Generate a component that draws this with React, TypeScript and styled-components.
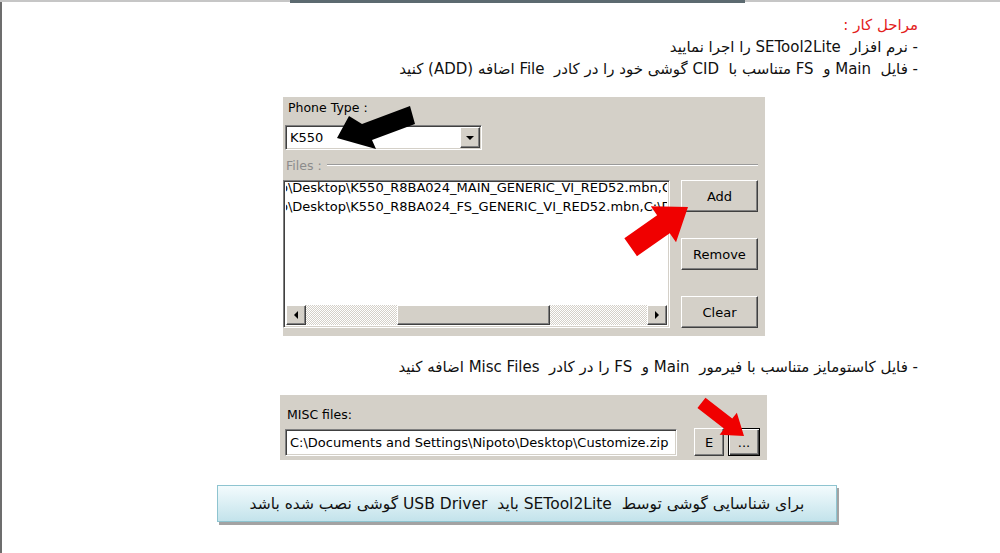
import React from 'react'
import styled, { createGlobalStyle, css } from 'styled-components'

const GlobalStyle = createGlobalStyle`
  html,
  body {
    margin: 0;
    padding: 0;
    background: #fff;
  }
  body {
    font-family: 'DejaVu Sans', sans-serif;
  }
`

// classic win9x bevels
const sunken = css`
  box-sizing: border-box;
  background: #fff;
  border: 1px solid;
  border-color: #808080 #fff #fff #808080;
  box-shadow: inset 1px 1px 0 #404040, inset -1px -1px 0 #d4d0c8;
`

const raised = css`
  box-sizing: border-box;
  background: #d4d0c8;
  border: 1px solid;
  border-color: #fff #404040 #404040 #fff;
  box-shadow: inset -1px -1px 0 #808080;
`

const Page = styled.div`
  position: relative;
  width: 1000px;
  height: 553px;
  overflow: hidden;
  background: #fff;
  box-shadow: inset 2px 0 0 #6d6d6d;
`

const TopRule = styled.div`
  display: flex;
  align-items: flex-start;
  height: 3px;
`

const RuleSegment = styled.div<{ $dark?: boolean; $width?: number }>`
  height: ${({ $dark }) => ($dark ? 3 : 2)}px;
  background: ${({ $dark }) => ($dark ? '#5c6a70' : '#c6c6c6')};
  ${({ $width }) => ($width ? `width: ${$width}px;` : 'flex: 1;')}
`

const Steps = styled.div<{ $top: number }>`
  margin-top: ${({ $top }) => $top}px;
  padding-right: 82px;
  direction: rtl;
  text-align: right;
  font-family: 'DejaVu Sans', sans-serif;
  font-size: 15px;
  line-height: 22px;
  color: #111;
  white-space: pre;
`

const Heading = styled.div`
  color: #e3211c;
`

const Panel = styled.div<{ $top: number; $left: number; $width: number; $height: number }>`
  box-sizing: border-box;
  margin-top: ${({ $top }) => $top}px;
  margin-left: ${({ $left }) => $left}px;
  width: ${({ $width }) => $width}px;
  height: ${({ $height }) => $height}px;
  display: flex;
  flex-direction: column;
  background: #d4d0c8;
  font-family: 'DejaVu Sans', sans-serif;
  font-size: 13px;
  color: #000;
`

const FieldLabel = styled.div<{ $indent: number; $top: number }>`
  margin-top: ${({ $top }) => $top}px;
  margin-left: ${({ $indent }) => $indent}px;
  font-size: 12.5px;
  line-height: 14px;
`

const Combo = styled.div`
  ${sunken}
  display: flex;
  align-items: center;
  margin: 10px 0 0 2px;
  width: 197px;
  height: 25px;
  padding: 1px;
`

const ComboValue = styled.span`
  flex: 1;
  padding-left: 3px;
  font-size: 13px;
`

const DropButton = styled.div`
  ${raised}
  display: flex;
  align-items: center;
  justify-content: center;
  width: 20px;
  height: 21px;
`

const Caret = styled.span<{ $dir: 'down' | 'left' | 'right' }>`
  width: 0;
  height: 0;
  ${({ $dir }) =>
    $dir === 'down'
      ? 'border-left: 4px solid transparent; border-right: 4px solid transparent; border-top: 4px solid #000;'
      : $dir === 'left'
      ? 'border-top: 4px solid transparent; border-bottom: 4px solid transparent; border-right: 4px solid #000;'
      : 'border-top: 4px solid transparent; border-bottom: 4px solid transparent; border-left: 4px solid #000;'}
`

const GroupHeader = styled.div`
  display: flex;
  align-items: center;
  gap: 5px;
  height: 14px;
  margin: 8px 7px 0 3px;
`

const GroupTitle = styled.span`
  color: #8c8c8c;
  font-size: 12.5px;
`

const Etch = styled.div`
  flex: 1;
  height: 1px;
  background: #9a9a9a;
  border-bottom: 1px solid #fff;
`

const FilesRow = styled.div`
  display: flex;
  align-items: flex-start;
  gap: 11px;
  margin-top: 8px;
`

const ListBox = styled.div`
  ${sunken}
  display: flex;
  flex-direction: column;
  width: 387px;
  height: 148px;
  padding: 2px;
  overflow: hidden;
`

const ListItems = styled.div`
  flex: 1;
  margin-top: -4px;
  overflow: hidden;
  white-space: nowrap;
  font-size: 13px;
  line-height: 18.5px;
`

const ListLine = styled.div`
  margin-left: -6px;
`

const HScroll = styled.div`
  display: flex;
  height: 20px;
`

const ScrollArrow = styled.div`
  ${raised}
  display: flex;
  align-items: center;
  justify-content: center;
  width: 20px;
  height: 20px;
`

const Track = styled.div`
  flex: 1;
  display: flex;
  background: repeating-conic-gradient(#fff 0 25%, #d4d0c8 0 50%) 0 0 / 2px 2px;
`

const Thumb = styled.div<{ $offset: number; $size: number }>`
  ${raised}
  margin-left: ${({ $offset }) => $offset}px;
  width: ${({ $size }) => $size}px;
`

const ButtonColumn = styled.div`
  display: flex;
  flex-direction: column;
  gap: 26px;
  width: 77px;
`

const WinButton = styled.div<{ $width?: number; $height?: number; $default?: boolean }>`
  ${raised}
  display: flex;
  align-items: center;
  justify-content: center;
  width: ${({ $width }) => ($width ? `${$width}px` : '100%')};
  height: ${({ $height }) => $height ?? 32}px;
  font-size: 13px;
  ${({ $default }) =>
    $default &&
    css`
      border: 1px solid #000;
      box-shadow: inset 1px 1px 0 #fff, inset -1px -1px 0 #404040, inset -2px -2px 0 #808080;
    `}
`

const MiscRow = styled.div`
  display: flex;
  align-items: center;
  margin: 6px 0 0 5px;
`

const PathField = styled.div`
  ${sunken}
  display: flex;
  align-items: center;
  width: 392px;
  height: 27px;
  padding-left: 4px;
  font-size: 13px;
  white-space: nowrap;
`

const Spacer = styled.div<{ $w: number }>`
  width: ${({ $w }) => $w}px;
`

const InfoBox = styled.div`
  box-sizing: border-box;
  display: flex;
  align-items: center;
  justify-content: center;
  margin: 25px 0 0 217px;
  width: 620px;
  height: 37px;
  border: 1px solid #8ec4d0;
  background: linear-gradient(#f3fbfd, #c3e3eb);
  box-shadow: 2px 3px 0 #a3a3a3;
  direction: rtl;
  font-size: 15.5px;
  color: #111;
  white-space: pre;
`

const ArrowLayer = styled.svg`
  position: absolute;
  left: 0;
  top: 0;
  width: 1000px;
  height: 553px;
  pointer-events: none;
`

type ArrowProps = {
  x: number
  y: number
  angle: number
  length: number
  shaft: number
  head: number
  headLength: number
  color: string
}

function Arrow({ x, y, angle, length, shaft, head, headLength, color }: ArrowProps) {
  const w = shaft / 2
  const h = head / 2
  const points = [
    [0, 0],
    [-headLength, -h],
    [-headLength, -w],
    [-length, -w],
    [-length, w],
    [-headLength, w],
    [-headLength, h]
  ]
    .map(p => p.join(','))
    .join(' ')
  return <polygon points={points} fill={color} transform={`translate(${x} ${y}) rotate(${angle})`} />
}

export default function App() {
  return (
    <Page>
      <GlobalStyle />
      <TopRule>
        <RuleSegment $width={290} />
        <RuleSegment $dark $width={455} />
        <RuleSegment />
      </TopRule>

      <Steps $top={11}>
        <Heading>مراحل کار :</Heading>
        <div>- نرم افزار  SETool2Lite را اجرا نمایید</div>
        <div>- فایل  Main و  FS متناسب با  CID گوشی خود را در کادر  File اضافه (ADD) کنید</div>
      </Steps>

      <Panel $top={17} $left={283} $width={482} $height={239}>
        <FieldLabel $top={4} $indent={5}>
          Phone Type :
        </FieldLabel>
        <Combo>
          <ComboValue>K550</ComboValue>
          <DropButton>
            <Caret $dir="down" />
          </DropButton>
        </Combo>
        <GroupHeader>
          <GroupTitle>Files :</GroupTitle>
          <Etch />
        </GroupHeader>
        <FilesRow>
          <ListBox>
            <ListItems>
              <ListLine>o\Desktop\K550_R8BA024_MAIN_GENERIC_VI_RED52.mbn,C:\Documents</ListLine>
              <ListLine>o\Desktop\K550_R8BA024_FS_GENERIC_VI_RED52.mbn,C:\Documents</ListLine>
            </ListItems>
            <HScroll>
              <ScrollArrow>
                <Caret $dir="left" />
              </ScrollArrow>
              <Track>
                <Thumb $offset={91} $size={153} />
              </Track>
              <ScrollArrow>
                <Caret $dir="right" />
              </ScrollArrow>
            </HScroll>
          </ListBox>
          <ButtonColumn>
            <WinButton>Add</WinButton>
            <WinButton>Remove</WinButton>
            <WinButton>Clear</WinButton>
          </ButtonColumn>
        </FilesRow>
      </Panel>

      <Steps $top={20}>
        <div>- فایل کاستومایز متناسب با فیرمور  Main و  FS را در کادر  Misc Files اضافه کنید</div>
      </Steps>

      <Panel $top={17} $left={280} $width={487} $height={65}>
        <FieldLabel $top={13} $indent={7}>
          MISC files:
        </FieldLabel>
        <MiscRow>
          <PathField>C:\Documents and Settings\Nipoto\Desktop\Customize.zip</PathField>
          <Spacer $w={17} />
          <WinButton $width={30} $height={28}>
            E
          </WinButton>
          <Spacer $w={4} />
          <WinButton $width={32} $height={28} $default>
            ...
          </WinButton>
        </MiscRow>
      </Panel>

      <InfoBox>برای شناسایی گوشی توسط  SETool2Lite باید  USB Driver گوشی نصب شده باشد</InfoBox>

      <ArrowLayer viewBox="0 0 1000 553">
        <polygon points="337,138 349,116 362,124 410,106 415,124 372,140 376,149" fill="#000" />
        <Arrow x={688} y={207} angle={-35} length={70} shaft={22} head={44} headLength={30} color="#f00000" />
        <Arrow x={744} y={436} angle={38} length={54} shaft={13} head={28} headLength={20} color="#f00000" />
      </ArrowLayer>
    </Page>
  )
}
